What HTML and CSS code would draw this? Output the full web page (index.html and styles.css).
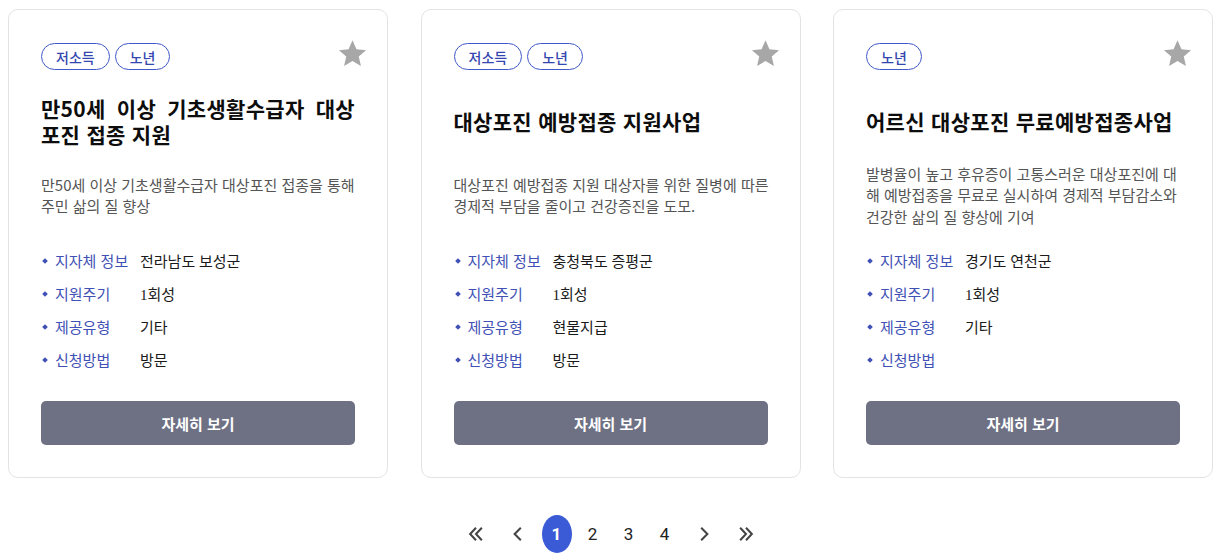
FILE: index.html
```html
<!DOCTYPE html>
<html lang="ko">
<head>
<meta charset="utf-8">
<title>지원사업 목록</title>
<link rel="stylesheet" href="styles.css">
</head>
<body>
<main class="page">
  <section class="cards">
    <article class="card">
      <div class="tags"><span class="tag">저소득</span><span class="tag">노년</span></div>
      <svg class="star" viewBox="0 0 24 24" aria-hidden="true"><path d="M12 1.8l3.05 6.9 7.45.7-5.65 4.95 1.68 7.35L12 17.85 5.47 21.7l1.68-7.35L1.5 9.4l7.45-.7z"/></svg>
      <div class="title-box"><h2 class="title justify">만50세 이상 기초생활수급자 대상포진 접종 지원</h2></div>
      <div class="desc-box"><p class="desc">만50세 이상 기초생활수급자 대상포진 접종을 통해 주민 삶의 질 향상</p></div>
      <dl class="info">
        <div class="row"><dt>지자체 정보</dt><dd>전라남도 보성군</dd></div>
        <div class="row"><dt>지원주기</dt><dd>1회성</dd></div>
        <div class="row"><dt>제공유형</dt><dd>기타</dd></div>
        <div class="row"><dt>신청방법</dt><dd>방문</dd></div>
      </dl>
      <button class="more">자세히 보기</button>
    </article>
    <article class="card">
      <div class="tags"><span class="tag">저소득</span><span class="tag">노년</span></div>
      <svg class="star" viewBox="0 0 24 24" aria-hidden="true"><path d="M12 1.8l3.05 6.9 7.45.7-5.65 4.95 1.68 7.35L12 17.85 5.47 21.7l1.68-7.35L1.5 9.4l7.45-.7z"/></svg>
      <div class="title-box"><h2 class="title">대상포진 예방접종 지원사업</h2></div>
      <div class="desc-box"><p class="desc">대상포진 예방접종 지원 대상자를 위한 질병에 따른 경제적 부담을 줄이고 건강증진을 도모.</p></div>
      <dl class="info">
        <div class="row"><dt>지자체 정보</dt><dd>충청북도 증평군</dd></div>
        <div class="row"><dt>지원주기</dt><dd>1회성</dd></div>
        <div class="row"><dt>제공유형</dt><dd>현물지급</dd></div>
        <div class="row"><dt>신청방법</dt><dd>방문</dd></div>
      </dl>
      <button class="more">자세히 보기</button>
    </article>
    <article class="card">
      <div class="tags"><span class="tag">노년</span></div>
      <svg class="star" viewBox="0 0 24 24" aria-hidden="true"><path d="M12 1.8l3.05 6.9 7.45.7-5.65 4.95 1.68 7.35L12 17.85 5.47 21.7l1.68-7.35L1.5 9.4l7.45-.7z"/></svg>
      <div class="title-box"><h2 class="title">어르신 대상포진 무료예방접종사업</h2></div>
      <div class="desc-box"><p class="desc">발병율이 높고 후유증이 고통스러운 대상포진에 대해 예방접종을 무료로 실시하여 경제적 부담감소와 건강한 삶의 질 향상에 기여</p></div>
      <dl class="info">
        <div class="row"><dt>지자체 정보</dt><dd>경기도 연천군</dd></div>
        <div class="row"><dt>지원주기</dt><dd>1회성</dd></div>
        <div class="row"><dt>제공유형</dt><dd>기타</dd></div>
        <div class="row"><dt>신청방법</dt><dd></dd></div>
      </dl>
      <button class="more">자세히 보기</button>
    </article>
  </section>
  <nav class="pager">
    <a class="pg arrow"><svg viewBox="0 0 16 16"><path d="M8 2.5L2.8 8 8 13.5M13.2 2.5L8 8l5.2 5.5"/></svg></a>
    <a class="pg arrow"><svg viewBox="0 0 16 16"><path d="M10.5 2.5L5 8l5.5 5.5"/></svg></a>
    <a class="pg num active">1</a>
    <a class="pg num">2</a>
    <a class="pg num">3</a>
    <a class="pg num">4</a>
    <a class="pg arrow"><svg viewBox="0 0 16 16"><path d="M5.5 2.5L11 8l-5.5 5.5"/></svg></a>
    <a class="pg arrow"><svg viewBox="0 0 16 16"><path d="M2.8 2.5L8 8l-5.2 5.5M8 2.5L13.2 8 8 13.5"/></svg></a>
  </nav>
</main>
</body>
</html>
```
FILE: styles.css
```css
* { box-sizing: border-box; }
body {
  margin: 0;
  background: #fff;
  font-family: "Noto Sans CJK KR", "Noto Sans", sans-serif;
  color: #111;
}
.page { padding: 9px 0 0 8px; }
.cards {
  display: grid;
  grid-template-columns: repeat(3, 380px);
  column-gap: 32.5px;
}
.card {
  position: relative;
  border: 1px solid #e3e3e6;
  border-radius: 10px;
  padding: 33px 32px 32px;
  display: flex;
  flex-direction: column;
}
.tags { display: flex; gap: 5px; height: 27px; }
.tag {
  display: inline-flex;
  align-items: center;
  height: 27px;
  padding: 0 14px;
  border: 1px solid #3f58c8;
  border-radius: 14px;
  color: #3446b0;
  font-size: 14px;
  font-weight: 500;
}
.star {
  position: absolute;
  top: 28px;
  right: 19px;
  width: 31px;
  height: 31px;
  fill: #a7a7a7;
}
.title-box {
  margin-top: 21px;
  height: 60px;
  display: flex;
  align-items: center;
}
.title {
  margin: 0;
  width: 100%;
  font-size: 21px;
  font-weight: 700;
  line-height: 26px;
  color: #0d0d0d;
  letter-spacing: 0.3px;
}
.title.justify { text-align: justify; }
.desc-box {
  margin-top: 11px;
  margin-right: -8px;
  height: 66px;
  display: flex;
  align-items: center;
}
.desc {
  margin: 0;
  font-size: 15px;
  line-height: 21.5px;
  color: #555;
}
.info { margin: 16px 0 0; }
.row {
  display: flex;
  align-items: center;
  height: 33px;
  font-size: 15px;
}
.row dt {
  position: relative;
  width: 99px;
  padding-left: 14px;
  color: #3f51b5;
}
.row dt::before {
  content: "";
  position: absolute;
  left: 2px;
  top: 50%;
  width: 4px;
  height: 4px;
  margin-top: -2px;
  background: #3f51b5;
  transform: rotate(45deg);
}
.row dd {
  margin: 0;
  color: #1a1a1a;
  font-family: "Liberation Serif", "Noto Sans CJK KR", serif;
}
.more {
  margin-top: 25px;
  height: 44px;
  width: 100%;
  border: 0;
  border-radius: 5px;
  background: #6e7083;
  color: #fff;
  font-family: "Noto Sans CJK KR", sans-serif;
  font-size: 15px;
  font-weight: 700;
}
.pager {
  margin-top: 37px;
  display: flex;
  justify-content: center;
  gap: 6px;
  padding-right: 12px;
}
.pg {
  display: flex;
  align-items: center;
  justify-content: center;
  height: 38px;
  color: #222;
  font-family: Roboto, "Noto Sans", sans-serif;
  font-size: 17px;
}
.num { width: 30px; }
.arrow { width: 36px; }
.arrow svg {
  width: 18px;
  height: 18px;
  fill: none;
  stroke: #444;
  stroke-width: 1.8;
}
.active {
  background: #3b5bd6;
  color: #fff;
  font-weight: 700;
  border-radius: 15px / 19px;
}
```
